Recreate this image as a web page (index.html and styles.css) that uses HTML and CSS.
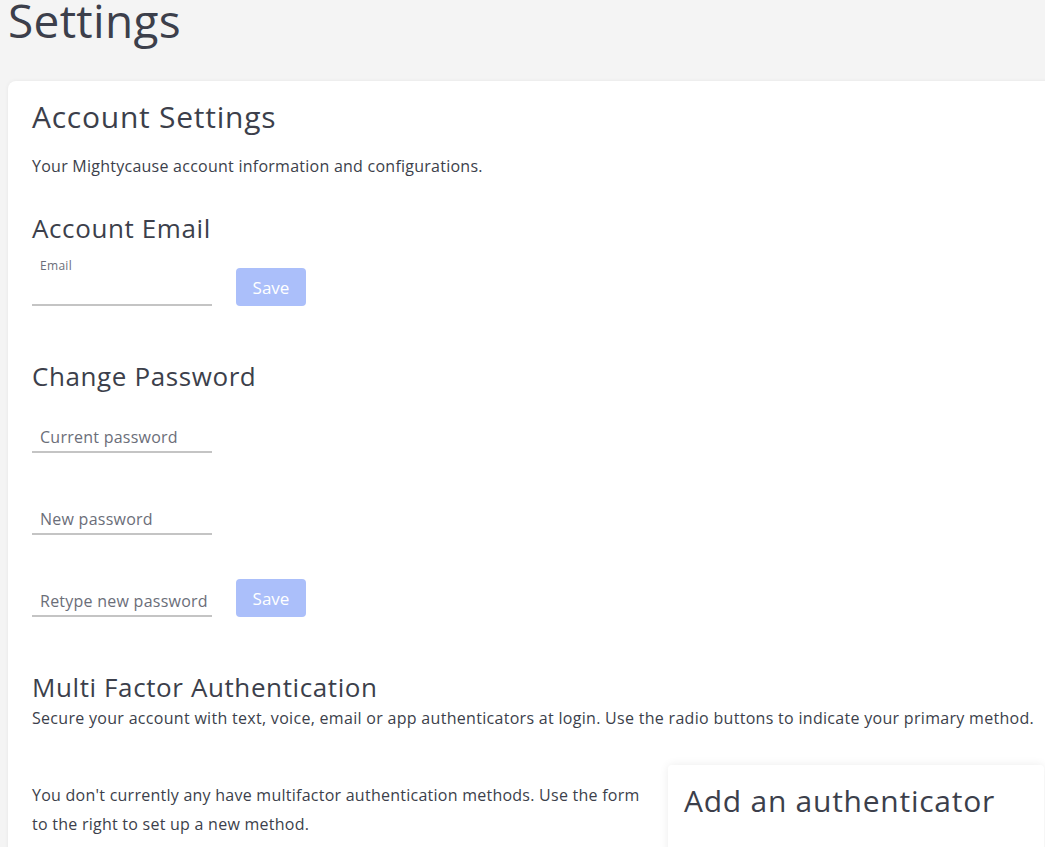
FILE: index.html
```html
<!DOCTYPE html>
<html>
<head>
<meta charset="utf-8">
<link rel="stylesheet" href="styles.css">
</head>
<body>
<h1 class="page-title">Settings</h1>
<div class="card">
  <h2 class="card-title">Account Settings</h2>
  <p class="intro">Your Mightycause account information and configurations.</p>

  <section class="section email-section">
    <h3 class="section-title">Account Email</h3>
    <div class="row">
      <label class="field field-labelled">
        <span class="field-label">Email</span>
        <input class="field-input" type="email">
      </label>
      <button class="save-btn" disabled>Save</button>
    </div>
  </section>

  <section class="section password-section">
    <h3 class="section-title">Change Password</h3>
    <div class="pw-list">
      <div class="row"><label class="field"><input class="field-input" type="password" placeholder="Current password"></label></div>
      <div class="row"><label class="field"><input class="field-input" type="password" placeholder="New password"></label></div>
      <div class="row"><label class="field"><input class="field-input" type="password" placeholder="Retype new password"></label><button class="save-btn" disabled>Save</button></div>
    </div>
  </section>

  <section class="section mfa-section">
    <h3 class="section-title">Multi Factor Authentication</h3>
    <p class="mfa-desc">Secure your account with text, voice, email or app authenticators at login. Use the radio buttons to indicate your primary method.</p>
    <div class="mfa-body">
      <p class="mfa-empty">You don't currently any have multifactor authentication methods. Use the form to the right to set up a new method.</p>
      <div class="auth-card">
        <h3 class="auth-title">Add an authenticator</h3>
      </div>
    </div>
  </section>
</div>
</body>
</html>
```

FILE: styles.css
```css
* { box-sizing: border-box; }
html, body { margin: 0; padding: 0; }
body {
  background: #f4f4f4;
  font-family: "Open Sans", "Lato", sans-serif;
  color: #3c3f4b;
  overflow: hidden;
  width: 1045px;
  height: 847px;
}
.page-title {
  margin: 0;
  padding: 0 0 0 8px;
  height: 81px;
  font-size: 46px;
  font-weight: 400;
  line-height: 40px;
  letter-spacing: 0.3px;
}
.card {
  margin-left: 8px;
  width: 1060px;
  background: #fff;
  border-radius: 8px;
  box-shadow: 0 0 4px rgba(0,0,0,0.06);
  padding: 17px 24px 0 24px;
  min-height: 800px;
}
.card-title {
  margin: 0;
  font-size: 30px;
  font-weight: 400;
  line-height: 38px;
  letter-spacing: 0.75px;
}
.intro {
  margin: 19px 0 0 0;
  font-size: 16px;
  line-height: 22px;
  letter-spacing: 0.25px;
}
.section-title {
  margin: 0;
  font-size: 26px;
  font-weight: 400;
  line-height: 32px;
  letter-spacing: 0.6px;
}
.email-section { margin-top: 35px; }
.row {
  display: flex;
  align-items: flex-end;
  gap: 24px;
}
.field {
  display: flex;
  flex-direction: column;
  width: 180px;
}
.field-label {
  font-size: 12px;
  color: #6b6e79;
  padding-left: 8px;
  line-height: 14px;
  margin-top: 15px;
  letter-spacing: 0.3px;
}
.field-input {
  border: none;
  border-bottom: 2px solid #c4c4c4;
  outline: none;
  background: transparent;
  font-family: inherit;
  font-size: 16px;
  color: #3c3f4b;
  padding: 8px 0 0 8px;
  height: 38px;
  width: 180px;
  letter-spacing: 0.25px;
}
.field-labelled .field-input { height: 33px; padding-top: 0; }
.field-input::placeholder { color: #6b6e79; opacity: 1; }
.save-btn {
  width: 70px;
  height: 38px;
  border: none;
  border-radius: 4px;
  background: #abbffa;
  color: #fff;
  font-family: inherit;
  font-size: 17px;
  padding: 0;
}
.password-section { margin-top: 54px; }
.pw-list {
  display: flex;
  flex-direction: column;
  gap: 44px;
  margin-top: 23px;
}
.mfa-section { margin-top: 54px; }
.mfa-desc {
  margin: 4px 0 0 0;
  font-size: 16px;
  line-height: 22px;
  letter-spacing: 0.3px;
}
.mfa-body {
  display: flex;
  align-items: flex-start;
  gap: 24px;
  margin-top: 36px;
}
.mfa-empty {
  margin: 16px 0 0 0;
  width: 612px;
  font-size: 16px;
  line-height: 29px;
  letter-spacing: 0.25px;
}
.auth-card {
  flex: 1;
  background: #fff;
  border-radius: 4px;
  box-shadow: 0 0 10px rgba(0,0,0,0.08);
  padding: 17px 16px;
  min-height: 120px;
}
.auth-title {
  margin: 0;
  font-size: 30px;
  font-weight: 400;
  line-height: 38px;
  letter-spacing: 0.75px;
}
```
